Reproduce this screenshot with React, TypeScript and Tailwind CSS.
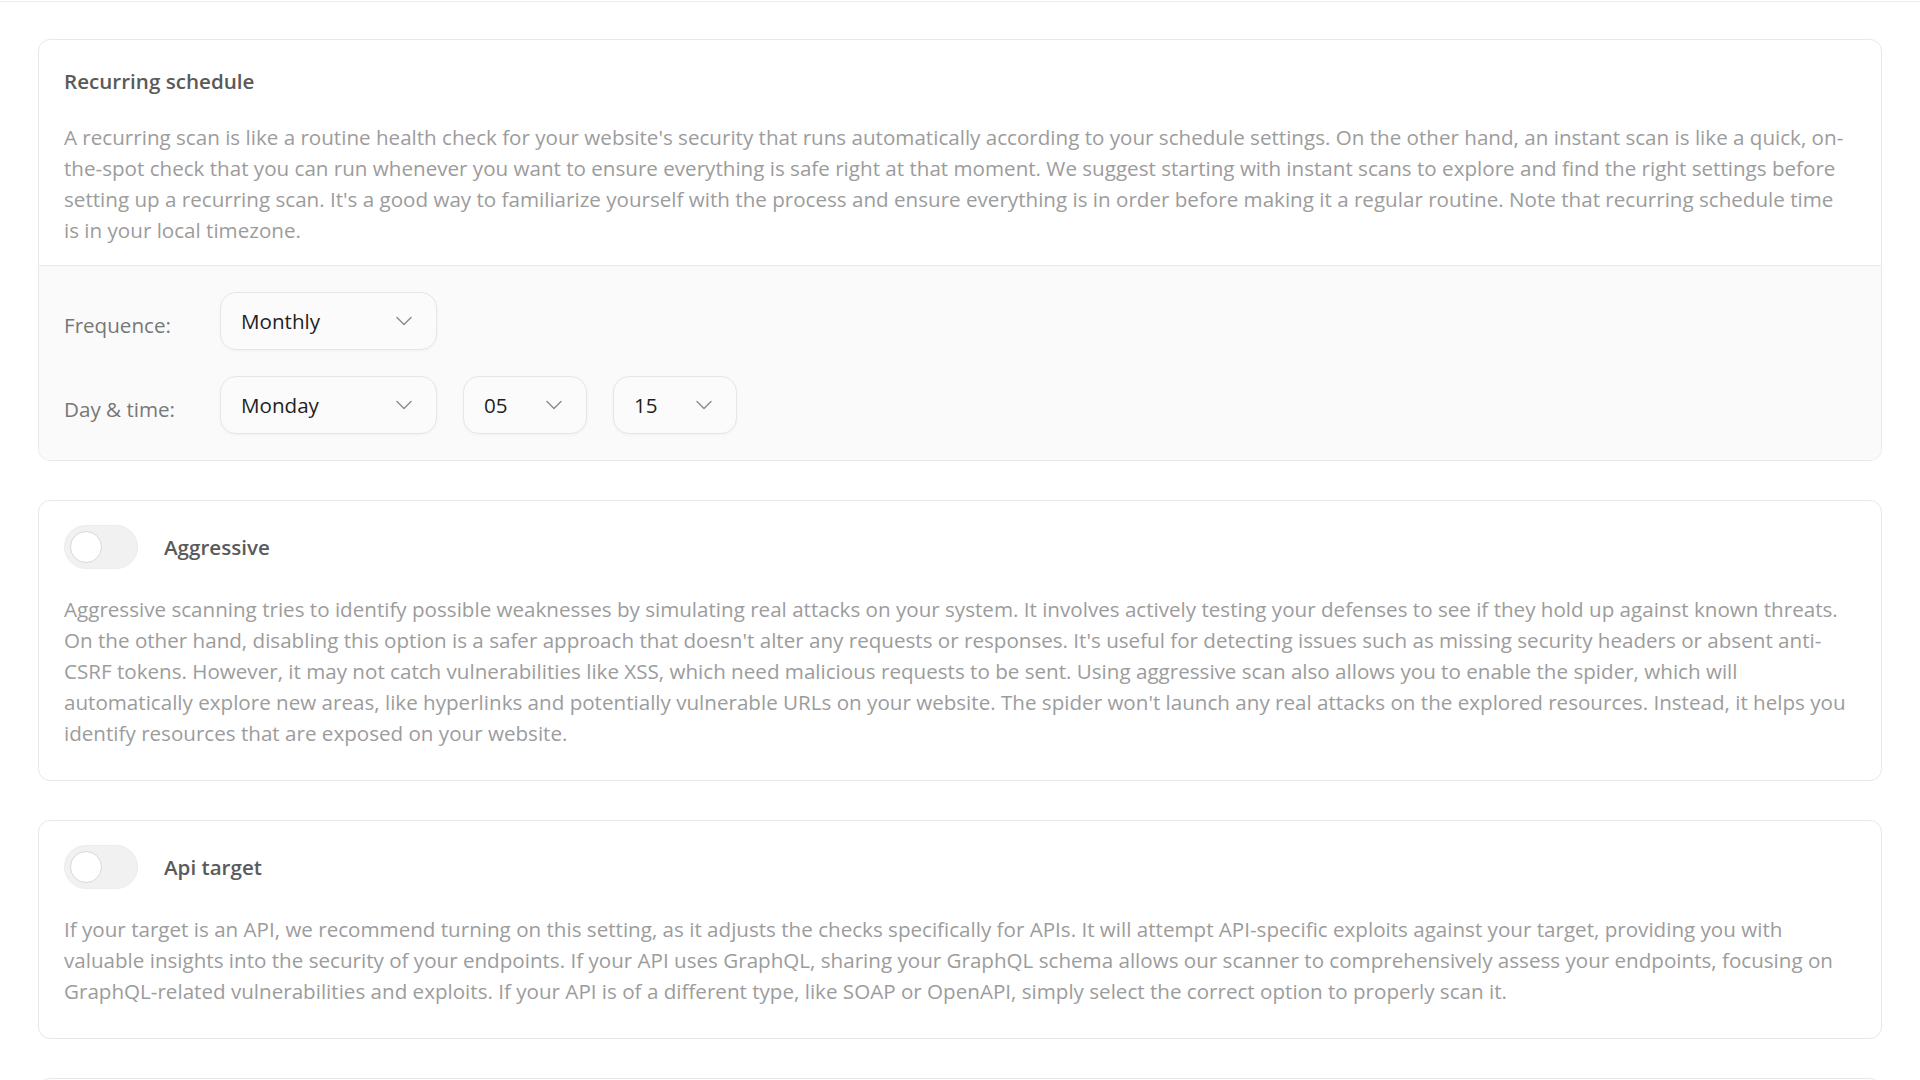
import React from "react";

const FONT = "font-['Segoe_UI','Open_Sans','Noto_Sans',sans-serif]";

const Chevron: React.FC = () => (
  <svg width="16" height="10" viewBox="0 0 16 10" fill="none" className="flex-shrink-0">
    <polyline points="1,1.5 8,8.5 15,1.5" stroke="#8a8a8a" strokeWidth="1.4" strokeLinecap="round" strokeLinejoin="round" />
  </svg>
);

interface SelectProps {
  value: string;
  wide?: boolean;
}

const FakeSelect: React.FC<SelectProps> = ({ value, wide = false }) => (
  <div
    className={`${wide ? "w-[217px]" : "w-[124px]"} h-[58px] flex items-center justify-between pl-5 pr-[24px] rounded-2xl border border-[#e6e6e6] bg-[#fbfbfb] shadow-[0_1px_3px_rgba(0,0,0,0.04)]`}
  >
    <span className="text-[20.6px] text-[#1f1f1f] leading-none">{value}</span>
    <Chevron />
  </div>
);

const Toggle: React.FC = () => (
  <div className="w-[74px] h-[44px] flex-shrink-0 flex items-center px-[5px] rounded-full bg-[#f1f1f1] border border-[#ececec]">
    <div className="w-[32px] h-[32px] rounded-full bg-white border border-[#d9d9d9]" />
  </div>
);

// Paragraph lines are listed one by one so they break where the original does.
const Lines: React.FC<{ lines: string[] }> = ({ lines }) => (
  <>
    {lines.map((l, i) => (
      <React.Fragment key={i}>
        {l}
        {i < lines.length - 1 && <br />}
      </React.Fragment>
    ))}
  </>
);

interface ToggleCardProps {
  title: string;
  lines: string[];
}

const ToggleCard: React.FC<ToggleCardProps> = ({ title, lines }) => (
  <div className="rounded-xl border border-[#e8e8e8] bg-white px-[25px] pt-[24px] pb-[31px]">
    <div className="flex items-center gap-[26px]">
      <Toggle />
      <span className="text-[20.6px] font-semibold text-[#5a5a5a]">{title}</span>
    </div>
    <p className="mt-[25px] text-[20.6px] leading-[31px] text-[#9c9c9c]">
      <Lines lines={lines} />
    </p>
  </div>
);

const recurringText = [
  "A recurring scan is like a routine health check for your website's security that runs automatically according to your schedule settings. On the other hand, an instant scan is like a quick, on-",
  "the-spot check that you can run whenever you want to ensure everything is safe right at that moment. We suggest starting with instant scans to explore and find the right settings before",
  "setting up a recurring scan. It's a good way to familiarize yourself with the process and ensure everything is in order before making it a regular routine. Note that recurring schedule time",
  "is in your local timezone.",
];

const aggressiveText = [
  "Aggressive scanning tries to identify possible weaknesses by simulating real attacks on your system. It involves actively testing your defenses to see if they hold up against known threats.",
  "On the other hand, disabling this option is a safer approach that doesn't alter any requests or responses. It's useful for detecting issues such as missing security headers or absent anti-",
  "CSRF tokens. However, it may not catch vulnerabilities like XSS, which need malicious requests to be sent. Using aggressive scan also allows you to enable the spider, which will",
  "automatically explore new areas, like hyperlinks and potentially vulnerable URLs on your website. The spider won't launch any real attacks on the explored resources. Instead, it helps you",
  "identify resources that are exposed on your website.",
];

const apiText = [
  "If your target is an API, we recommend turning on this setting, as it adjusts the checks specifically for APIs. It will attempt API-specific exploits against your target, providing you with",
  "valuable insights into the security of your endpoints. If your API uses GraphQL, sharing your GraphQL schema allows our scanner to comprehensively assess your endpoints, focusing on",
  "GraphQL-related vulnerabilities and exploits. If your API is of a different type, like SOAP or OpenAPI, simply select the correct option to properly scan it.",
];

export default function App() {
  return (
    <div className={`min-h-screen bg-white ${FONT}`}>
      <div className="h-[2px] border-b border-[#ededed]" />

      <div className="px-[38px] pt-[37px] flex flex-col gap-[39px] pb-10">
        {/* Recurring schedule */}
        <div className="rounded-xl border border-[#e8e8e8] bg-white overflow-hidden">
          <div className="px-[25px] pt-[26px] pb-[19px] border-b border-[#e8e8e8]">
            <div className="text-[20.6px] leading-[31px] font-semibold text-[#5a5a5a]">Recurring schedule</div>
            <p className="mt-[25px] text-[20.6px] leading-[31px] text-[#9c9c9c]">
              <Lines lines={recurringText} />
            </p>
          </div>
          <div className="bg-[#fafafa] px-[25px] py-[26px] flex flex-col gap-[26px]">
            <div className="flex items-center">
              <span className="w-[156px] pt-2 text-[20.6px] text-[#777]">Frequence:</span>
              <FakeSelect value="Monthly" wide />
            </div>
            <div className="flex items-center">
              <span className="w-[156px] pt-2 text-[20.6px] text-[#777]">Day &amp; time:</span>
              <div className="flex items-center gap-[26px]">
                <FakeSelect value="Monday" wide />
                <FakeSelect value="05" />
                <FakeSelect value="15" />
              </div>
            </div>
          </div>
        </div>

        <ToggleCard title="Aggressive" lines={aggressiveText} />
        <ToggleCard title="Api target" lines={apiText} />
        <ToggleCard
          title="Authentication"
          lines={["Provide credentials so the scanner can reach pages that are only available to signed-in users of your website."]}
        />
      </div>
    </div>
  );
}
